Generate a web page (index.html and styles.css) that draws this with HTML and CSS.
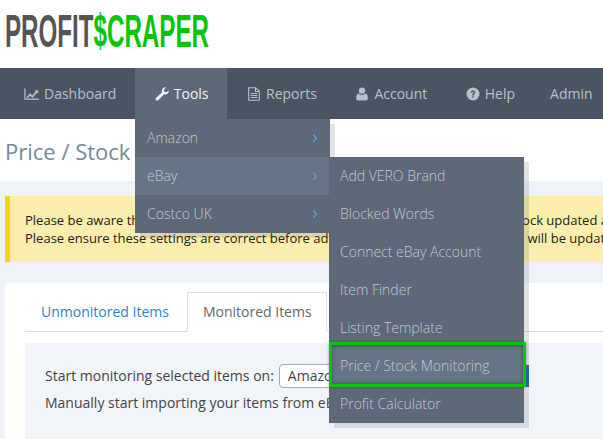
FILE: index.html

```html
<!DOCTYPE html>
<html lang="en">

<head>
  <meta charset="UTF-8">
  <title>Profit Scraper</title>
  <link rel="stylesheet" href="styles.css">
</head>

<body>
  <header class="logo-bar">
    <div class="logo">PROFIT<span class="logo-green">$CRAPER</span></div>
  </header>

  <nav class="nav">
    <a class="nav-item">
      <svg class="nav-icon icon-wide" viewBox="0 0 16 14"><path d="M1 1v11.5h15" fill="none" stroke="currentColor" stroke-width="1.3"/><path d="M2.8 10.5l3.6-4.2 2.6 2.4 3.6-4.6-1.3-1.2h3.9v3.9l-1.2-1.3-4.9 5.8-2.6-2.4-2.6 3z" fill="currentColor"/></svg>
      Dashboard
    </a>
    <a class="nav-item nav-active">
      <svg class="nav-icon" viewBox="0 0 14 14"><path d="M13.7 3.4c.2 1.6-.4 3-1.7 3.7-1 .5-2 .5-2.9.1l-5.6 5.9c-.7.7-1.7.7-2.3.1-.7-.7-.7-1.7 0-2.4l5.9-5.5c-.4-1-.4-2.1.2-3C8.1.5 9.6-.1 11.2.3L8.8 2.7l.4 2.1 2.1.5z" fill="currentColor"/></svg>
      Tools
    </a>
    <a class="nav-item">
      <svg class="nav-icon" viewBox="0 0 12 14"><path d="M.7.7h7l3.6 3.6v9H.7zM7.5.7v3.8h3.8M2.8 6.5h6.4M2.8 8.5h6.4M2.8 10.5h6.4" fill="none" stroke="currentColor" stroke-width="1.1"/></svg>
      Reports
    </a>
    <a class="nav-item">
      <svg class="nav-icon" viewBox="0 0 12 14"><circle cx="6" cy="3.6" r="3.2" fill="currentColor"/><path d="M2.5 6.6C3.5 7.5 4.6 8 6 8s2.5-.5 3.5-1.4c1.7.3 2.3 2.3 2.3 4.7 0 1.400-.9 2.200-2.200 2.200H2.400C1.100 13.500.2 12.700.2 11.300c0-2.400.6-4.400 2.300-4.700z" fill="currentColor"/></svg>
      Account
    </a>
    <a class="nav-item nav-help">
      <svg class="nav-icon" viewBox="0 0 14 14"><circle cx="7" cy="7" r="6.5" fill="currentColor"/><path d="M4.8 5.4C5 4.2 5.9 3.6 7.1 3.6c1.3 0 2.2.8 2.2 1.9 0 1.7-1.7 1.600-1.700 2.900H6.200c0-2 1.600-2 1.600-2.900 0-.4-.3-.7-.8-.7-.5 0-.8.3-.9.900zM6.200 9.200h1.500v1.400H6.200z" fill="#4a5564"/></svg>
      Help
    </a>
    <a class="nav-item">Admin</a>
  </nav>

  <div class="title-bar">
    <h1 class="page-title">Price / Stock Monitoring</h1>
  </div>

  <main class="content">
    <div class="alert">
      Please be aware that the price and stock of your monitored items will have their stock updated automatically.<br>
      Please ensure these settings are correct before adding all items, as all eBay listings will be updated.
    </div>

    <div class="card">
      <div class="tabs">
        <a class="tab tab-link">Unmonitored Items</a>
        <a class="tab tab-current">Monitored Items</a>
      </div>
      <div class="panel">
        <div class="panel-row">
          Start monitoring selected items on:
          <span class="select">Amazon UK</span>
          <span class="btn">Start</span>
        </div>
        <div class="panel-row">Manually start importing your items from eBay now</div>
      </div>
    </div>
  </main>

  <!-- dropdown menus -->
  <ul class="menu menu-main">
    <li>Amazon<span class="arrow">›</span></li>
    <li class="menu-open">eBay<span class="arrow">›</span></li>
    <li>Costco UK<span class="arrow">›</span></li>
  </ul>

  <ul class="menu menu-sub">
    <li>Add VERO Brand</li>
    <li>Blocked Words</li>
    <li>Connect eBay Account</li>
    <li>Item Finder</li>
    <li>Listing Template</li>
    <li class="menu-mark">Price / Stock Monitoring</li>
    <li>Profit Calculator</li>
  </ul>
</body>

</html>
```

FILE: styles.css

```css
* {
  box-sizing: border-box;
  margin: 0;
  padding: 0;
}

html,
body {
  height: 439px;
  overflow: hidden;
}

body {
  position: relative;
  font-family: 'Open Sans', sans-serif;
  font-size: 14px;
  color: #444;
  background: #fff;
}

/* logo */
.logo-bar {
  height: 68px;
  padding: 8px 0 0 5px;
}

.logo {
  font-family: 'Liberation Sans', sans-serif;
  font-size: 46px;
  line-height: 46px;
  font-weight: 700;
  color: #555;
  white-space: nowrap;
  transform: scaleX(.525);
  transform-origin: left center;
}

.logo-green {
  color: #0ac40a;
}

/* nav */
.nav {
  display: flex;
  height: 51px;
  padding-left: 4px;
  background: #4a5564;
  color: #b9c0c9;
}

.nav-item {
  display: flex;
  align-items: center;
  gap: 5px;
  padding: 0 18.5px 0 20px;
  white-space: nowrap;
}

.nav-active {
  background: #5d6878;
  color: #f1f3f5;
}

.nav-help {
  padding-right: 15px;
}

.nav-icon {
  width: 14px;
  height: 14px;
}

.icon-wide {
  width: 15px;
}

/* title */
.title-bar {
  height: 62px;
  padding: 14px 5px 0;
}

.page-title {
  font-size: 22px;
  line-height: 36px;
  font-weight: 400;
  color: #748998;
  white-space: nowrap;
}

/* content */
.content {
  height: 258px;
  padding: 15px 0 0 5px;
  background: #eff3f8;
}

.alert {
  height: 66px;
  padding: 15px 0 0 15px;
  line-height: 18px;
  font-size: 13px;
  color: #222;
  background: #fbeeac;
  border-left: 5px solid #f5d516;
  white-space: nowrap;
  overflow: hidden;
}

.card {
  height: 156px;
  margin-top: 21px;
  padding: 9px 0 0 20px;
  background: #fff;
}

.tabs {
  display: flex;
  height: 40px;
  border-bottom: 1px solid #ddd;
}

.tab {
  height: 40px;
  padding: 0 16px;
  line-height: 40px;
}

.tab-link {
  color: #2c83c4;
}

.tab-current {
  margin-left: 2px;
  padding: 0 14px 0 15px;
  line-height: 38px;
  color: #666;
  background: #fff;
  border: 1px solid #ddd;
  border-bottom-color: #fff;
}

.panel {
  margin-top: 11px;
  height: 100px;
  padding: 19px 20px 0;
  background: #f1f4f8;
}

.panel-row {
  display: flex;
  align-items: center;
  gap: 5px;
  height: 27px;
  white-space: nowrap;
}

.select {
  height: 24px;
  width: 140px;
  padding: 0 8px;
  line-height: 22px;
  background: #fff;
  border: 1px solid #aaa;
  border-radius: 4px;
}

.btn {
  width: 105px;
  height: 22px;
  line-height: 22px;
  text-align: center;
  color: #fff;
  background: #2271b3;
}

/* menus */
.menu {
  position: absolute;
  width: 195px;
  list-style: none;
  font-weight: 300;
  color: #c3cad2;
  background: #5d6878;
  box-shadow: 5px 5px 0 rgba(60, 70, 90, .15);
}

.menu li {
  display: flex;
  justify-content: space-between;
  height: 38px;
  padding: 0 11px;
  line-height: 38px;
}

.menu-main {
  left: 135px;
  top: 119px;
}

.menu-main li {
  padding-left: 12px;
}

.menu-sub {
  left: 329px;
  top: 157px;
}

.menu-open {
  background: #667585;
}

.arrow {
  font-size: 19px;
  font-weight: 400;
  line-height: 34px;
  color: #5aa3dc;
  padding-right: 1px;
}

.menu-mark {
  position: relative;
  background: #667585;
}

/* green highlight drawn over the item */
.menu-mark::after {
  content: "";
  position: absolute;
  left: 0;
  right: -2px;
  top: -5px;
  bottom: -2px;
  border: 3px solid #0ac40a;
  box-shadow: inset 0 0 4px rgba(40, 50, 60, .6), 0 0 3px rgba(40, 50, 60, .4);
}
```
